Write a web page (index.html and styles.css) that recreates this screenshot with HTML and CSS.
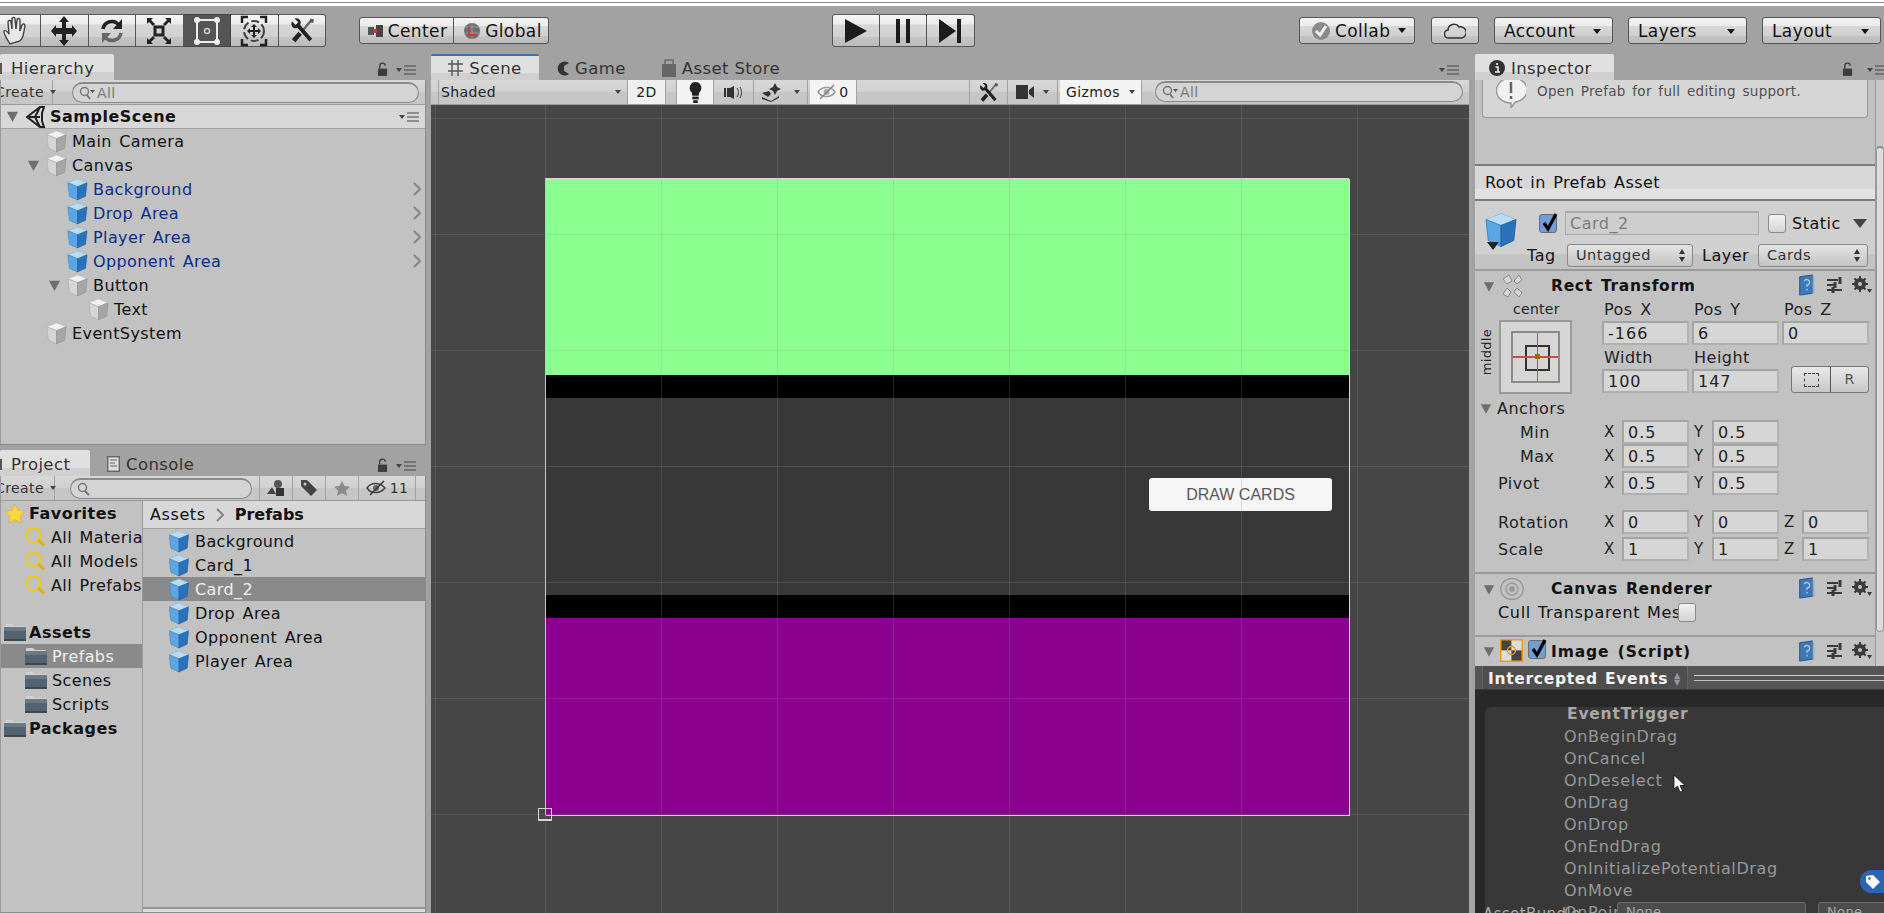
FILE: index.html
```html
<!DOCTYPE html>
<html lang="en">
<head>
    <meta charset="UTF-8" />
    <title>Unity - SampleScene</title>
    <link rel="stylesheet" href="styles.css">
</head>
<body>
    <svg class="defs" width="0" height="0">
        <defs>
            <symbol id="cube" viewBox="0 0 22 24">
                <path d="M11 1 21 5 11 9 1 5Z" fill="#f2f2f2" stroke="#c4c4c4" stroke-width=".6"/>
                <path d="M1 5 11 9V23L2.500 19Z" fill="#d6d6d6" stroke="#a8a8a8" stroke-width=".6"/>
                <path d="M21 5 11 9V23L19.500 19Z" fill="#a6a6a6" stroke="#8c8c8c" stroke-width=".6"/>
            </symbol>
            <symbol id="cube-blue" viewBox="0 0 22 24">
                <path d="M11 1 21 5 11 9 1 5Z" fill="#bcdcf6" stroke="#8cbce4" stroke-width=".6"/>
                <path d="M1 5 11 9V23L2.500 19Z" fill="#5aa6e6" stroke="#3f7fb8" stroke-width=".6"/>
                <path d="M21 5 11 9V23L19.500 19Z" fill="#2a72bc" stroke="#225f9c" stroke-width=".6"/>
            </symbol>
            <symbol id="folder" viewBox="0 0 22 20">
                <path d="M1 3a1 1 0 0 1 1-1h6l2 2h10a1 1 0 0 1 1 1v4H1Z" fill="#d0d0d0"/>
                <rect x="0" y="5" width="22" height="14" rx="1.500" fill="#52626e"/>
                <rect x="0" y="5" width="22" height="4" rx="1.500" fill="#6c7882"/>
                <rect x="0" y="17" width="22" height="2" fill="#3e4a52"/>
            </symbol>
            <symbol id="mag" viewBox="0 0 22 22">
                <circle cx="9" cy="9" r="7.500" fill="none" stroke="#f0c818" stroke-width="2"/>
                <path d="M14 14 20 20" stroke="#e0b010" stroke-width="3"/>
            </symbol>
            <symbol id="lock" viewBox="0 0 12 16">
                <path d="M3 7V4a3 3 0 0 1 6 0" fill="none" stroke="#3c3c3c" stroke-width="1.500"/>
                <rect x="1" y="7" width="10" height="8" fill="#3c3c3c"/>
            </symbol>
            <symbol id="menu" viewBox="0 0 21 10">
                <path d="M0 3H6L3 7Z" fill="#444"/>
                <path d="M8 1H20M8 5H20M8 9H20" stroke="#444" stroke-width="1.200"/>
            </symbol>
            <symbol id="help" viewBox="0 0 18 24">
                <path d="M1 3 15 1V21L1 23Z" fill="#3f78b4" stroke="#24507e"/>
                <path d="M15 1 17 3V22L15 21Z" fill="#8fb2d4"/>
                <path d="M6 8a3 3 0 1 1 3 4v2M9 16v2" fill="none" stroke="#a8c8e6" stroke-width="1.500"/>
            </symbol>
            <symbol id="presets" viewBox="0 0 15 16">
                <path d="M0 3H11M0 8H7M0 13H15" stroke="#3a3a3a" stroke-width="2"/>
                <path d="M13 0V7M8 5V11M6 10V16" stroke="#3a3a3a" stroke-width="3"/>
            </symbol>
            <symbol id="gear" viewBox="0 0 20 18">
                <circle cx="8" cy="8" r="4.500" fill="none" stroke="#3a3a3a" stroke-width="3"/>
                <path d="M8 0V16M0 8H16M2.500 2.500 13.500 13.500M13.500 2.500 2.500 13.500" stroke="#3a3a3a" stroke-width="2"/>
                <circle cx="8" cy="8" r="2" fill="#c2c2c2"/>
                <path d="M15 13H20L17.500 17Z" fill="#3a3a3a"/>
            </symbol>
            <symbol id="arrow-down" viewBox="0 0 14 14">
                <path d="M1 2H13L7 13Z" fill="#6e6e6e"/>
            </symbol>
            <symbol id="chev" viewBox="0 0 8 14">
                <path d="M1 1 7 7 1 13" fill="none" stroke="#868686" stroke-width="2"/>
            </symbol>
            <symbol id="tools" viewBox="0 0 26 28">
                <path d="M14 14 23 3" stroke="#666" stroke-width="2.500"/>
                <path d="M22 1 26 2 25 6 22 5Z" fill="#555"/>
                <path d="M2 4 6 8 9 5 5 1C10 0 13 4 11 8L24 23 21 26 8 11C4 13 0 9 2 4Z" fill="#222"/>
                <path d="M11 17 4 25" stroke="#222" stroke-width="5"/>
            </symbol>
            <symbol id="tick" viewBox="0 0 18 20">
                <path d="M4 10 8 16 16 1" fill="none" stroke="#000" stroke-width="3.200"/>
            </symbol>
        </defs>
    </svg>

    <div class="topstrip"></div>

    <header class="toolbar">
        <div class="btn-group tools">
            <button class="tool">
                <svg width="26" height="30" viewBox="0 0 26 30"><path d="M8 28C5 23 1 17 2 15c1-1 3 0 5 3L6 6c0-2 3-2 3 0l1 7 0-10c0-2 3-2 3 0l1 10 1-9c0-2 3-2 3 0l0 11 2-6c1-2 3-1 3 1l-2 10c-1 3-2 4-3 5Z" fill="#e8e8e8" stroke="#444" stroke-width="1.400"/></svg>
            </button>
            <button class="tool">
                <svg width="26" height="30" viewBox="0 0 26 30"><path d="M13 0 18 6H15V12H21V9L26 15 21 21V18H15V24H18L13 30 8 24H11V18H5V21L0 15 5 9V12H11V6H8Z" fill="#222"/></svg>
            </button>
            <button class="tool">
                <svg width="24" height="26" viewBox="0 0 24 26"><path d="M3 11A9 9 0 0 1 19 7" fill="none" stroke="#222" stroke-width="3.500"/><path d="M22 1V11H13Z" fill="#222"/><path d="M21 15A9 9 0 0 1 5 19" fill="none" stroke="#666" stroke-width="3.500"/><path d="M2 25V15H11Z" fill="#666"/></svg>
            </button>
            <button class="tool">
                <svg width="26" height="28" viewBox="0 0 26 28"><rect x="9" y="10" width="8" height="8" fill="none" stroke="#222" stroke-width="3"/><path d="M1 1H7L5 3 9 7 7 9 3 5 1 7ZM25 1H19L21 3 17 7 19 9 23 5 25 7ZM1 27H7L5 25 9 21 7 19 3 23 1 21ZM25 27H19L21 25 17 21 19 19 23 23 25 21Z" fill="#222"/></svg>
            </button>
            <button class="tool tool-on">
                <svg width="28" height="30" viewBox="0 0 28 30"><rect x="4" y="4" width="20" height="22" fill="none" stroke="#eee" stroke-width="2"/><circle cx="4" cy="4" r="3" fill="#eee"/><circle cx="24" cy="4" r="3" fill="#eee"/><circle cx="4" cy="26" r="3" fill="#eee"/><circle cx="24" cy="26" r="3" fill="#eee"/><circle cx="14" cy="15" r="2.500" fill="none" stroke="#ccc" stroke-width="1.500"/></svg>
            </button>
            <button class="tool">
                <svg width="28" height="32" viewBox="0 0 28 32"><path d="M2 8V2H8M20 2H26V8M2 24V30H8M20 30H26V24" fill="none" stroke="#222" stroke-width="2.500"/><circle cx="14" cy="16" r="10" fill="none" stroke="#444" stroke-width="2" stroke-dasharray="8 3"/><path d="M14 9 17 12H15V15H18V13L21 16 18 19V17H15V20H17L14 23 11 20H13V17H10V19L7 16 10 13V15H13V12H11Z" fill="#222"/></svg>
            </button>
            <button class="tool">
                <svg width="24" height="27"><use href="#tools"/></svg>
            </button>
        </div>

        <div class="btn-group pivot">
            <button class="small-btn pivot-center">
                <svg width="15" height="12" viewBox="0 0 15 12"><rect x="0" y="2" width="6" height="8" fill="#555"/><rect x="8" y="0" width="7" height="12" fill="#444"/><rect x="5" y="4" width="4" height="4" fill="#c83a3a"/></svg>
                Center
            </button>
            <button class="small-btn pivot-global">
                <svg width="16" height="20" viewBox="0 0 16 20"><circle cx="8" cy="10" r="8" fill="#6e6e6e"/><path d="M1 6H15M1 12H15M8 2V18" stroke="#999"/><path d="M5 6V14H13" fill="none" stroke="#d03a3a" stroke-width="2"/></svg>
                Global
            </button>
        </div>

        <div class="btn-group play">
            <button class="tool play-btn"><svg width="22" height="24" viewBox="0 0 22 24"><path d="M0 0 22 12 0 24Z" fill="#1c1c1c"/></svg></button>
            <button class="tool play-btn"><svg width="14" height="24" viewBox="0 0 14 24"><path d="M0 0H4V24H0ZM10 0H14V24H10Z" fill="#1c1c1c"/></svg></button>
            <button class="tool play-btn"><svg width="22" height="24" viewBox="0 0 22 24"><path d="M0 0 17 12 0 24ZM18 0H22V24H18Z" fill="#1c1c1c"/></svg></button>
        </div>

        <div class="right-btns">
            <button class="small-btn solo collab">
                <svg width="18" height="20" viewBox="0 0 18 20"><circle cx="9" cy="10" r="9" fill="#8a8a8a"/><path d="M4 10 8 14 14 5" fill="none" stroke="#f0f0f0" stroke-width="3"/></svg>
                Collab <i class="caret"></i>
            </button>
            <button class="small-btn solo cloud">
                <svg width="22" height="17" viewBox="0 0 22 17"><path d="M5 16a4 4 0 0 1-1-8 6 6 0 0 1 11-3 5 5 0 0 1 3 11Z" fill="none" stroke="#333" stroke-width="1.500"/></svg>
            </button>
            <button class="small-btn solo wide">Account <i class="caret"></i></button>
            <button class="small-btn solo wide">Layers <i class="caret"></i></button>
            <button class="small-btn solo wide">Layout <i class="caret"></i></button>
        </div>
    </header>

    <main class="dock">
        <div class="left-col">
            <section class="hierarchy">
                <div class="tabrow">
                    <div class="tab tab-on tab-hier"><i class="tab-cut"></i>Hierarchy</div>
                    <svg class="lock" width="11" height="15"><use href="#lock"/></svg>
                    <svg class="menu" width="21" height="10"><use href="#menu"/></svg>
                </div>
                <div class="panel">
                    <div class="minibar">
                        <div class="create">Create <i class="caret-s"></i></div>
                        <div class="search search-hier"><svg width="16" height="14" viewBox="0 0 16 14"><circle cx="5.500" cy="5.500" r="4" fill="none" stroke="#777" stroke-width="1.500"/><path d="M8 9 11 13" stroke="#777" stroke-width="2"/><path d="M11 4H16L13.500 7Z" fill="#555"/></svg>All</div>
                    </div>
                    <div class="scene-head">
                        <svg class="arrow" width="13" height="13"><use href="#arrow-down"/></svg>
                        <svg width="21" height="24" viewBox="0 0 21 24"><path d="M2 12 15 2 19 2 17 8 17 16 19 22 15 22ZM4 12H15M15 2 10 12 15 22" fill="none" stroke="#222" stroke-width="2"/></svg>
                        <span>SampleScene</span>
                        <svg class="menu head-menu" width="21" height="10"><use href="#menu"/></svg>
                    </div>
                    <ul class="tree">
                        <li class="tree-row d1"><span class="slot"></span><svg class="ico" width="21" height="23"><use href="#cube"/></svg>Main Camera</li>
                        <li class="tree-row d1"><span class="slot"><svg width="13" height="13"><use href="#arrow-down"/></svg></span><svg class="ico" width="21" height="23"><use href="#cube"/></svg>Canvas</li>
                        <li class="tree-row d2 prefab"><span class="slot"></span><svg class="ico" width="21" height="23"><use href="#cube-blue"/></svg>Background<svg class="chev" width="8" height="14"><use href="#chev"/></svg></li>
                        <li class="tree-row d2 prefab"><span class="slot"></span><svg class="ico" width="21" height="23"><use href="#cube-blue"/></svg>Drop Area<svg class="chev" width="8" height="14"><use href="#chev"/></svg></li>
                        <li class="tree-row d2 prefab"><span class="slot"></span><svg class="ico" width="21" height="23"><use href="#cube-blue"/></svg>Player Area<svg class="chev" width="8" height="14"><use href="#chev"/></svg></li>
                        <li class="tree-row d2 prefab"><span class="slot"></span><svg class="ico" width="21" height="23"><use href="#cube-blue"/></svg>Opponent Area<svg class="chev" width="8" height="14"><use href="#chev"/></svg></li>
                        <li class="tree-row d2"><span class="slot"><svg width="13" height="13"><use href="#arrow-down"/></svg></span><svg class="ico" width="21" height="23"><use href="#cube"/></svg>Button</li>
                        <li class="tree-row d3"><span class="slot"></span><svg class="ico" width="21" height="23"><use href="#cube"/></svg>Text</li>
                        <li class="tree-row d1"><span class="slot"></span><svg class="ico" width="21" height="23"><use href="#cube"/></svg>EventSystem</li>
                    </ul>
                </div>
            </section>

            <section class="project">
                <div class="tabrow">
                    <div class="tab tab-on tab-proj"><i class="tab-cut"></i>Project</div>
                    <div class="tab tab-console">
                        <svg width="13" height="16" viewBox="0 0 13 16"><rect x=".7" y=".7" width="11.600" height="14.600" fill="#ddd" stroke="#666" stroke-width="1.400"/><path d="M3 4H10M3 7H8M3 10H10" stroke="#666" stroke-width="1.200"/></svg>
                        Console
                    </div>
                    <svg class="lock" width="11" height="15"><use href="#lock"/></svg>
                    <svg class="menu" width="21" height="10"><use href="#menu"/></svg>
                </div>
                <div class="panel">
                    <div class="minibar proj-bar">
                        <div class="create create-proj">Create <i class="caret-s"></i></div>
                        <div class="search search-proj"><svg width="14" height="14" viewBox="0 0 14 14"><circle cx="5.500" cy="5.500" r="4" fill="none" stroke="#777" stroke-width="1.500"/><path d="M8 9 12 13" stroke="#777" stroke-width="2"/></svg></div>
                        <div class="bar-btn"><svg width="18" height="16" viewBox="0 0 18 16"><path d="M5 7 9 14H0Z" fill="#444"/><circle cx="11" cy="4" r="4" fill="#555"/><rect x="9" y="8" width="8" height="8" fill="#333"/></svg></div>
                        <div class="bar-btn"><svg width="18" height="18" viewBox="0 0 18 18"><path d="M1 1H7L17 11 11 17 1 7Z" fill="#444"/><circle cx="5" cy="5" r="1.500" fill="#ccc"/></svg></div>
                        <div class="bar-btn"><svg width="16" height="15" viewBox="0 0 16 15"><path d="M8 0 10.500 5 16 5.700 12 9.500 13 15 8 12.300 3 15 4 9.500 0 5.700 5.500 5Z" fill="#8c8c8c"/></svg></div>
                        <div class="bar-btn bar-btn-wide"><svg width="20" height="16" viewBox="0 0 20 16"><path d="M1 8C5 2 14 2 19 8 14 14 5 14 1 8Z" fill="none" stroke="#444" stroke-width="1.500"/><circle cx="10" cy="8" r="3" fill="#666"/><path d="M4 15 18 1" stroke="#333" stroke-width="1.500"/></svg>11</div>
                    </div>
                    <div class="proj-body">
                        <ul class="proj-side">
                            <li class="side-row strong"><svg class="side-star" width="20" height="19" viewBox="0 0 20 19"><path d="M10 0 13 6.500 20 7.300 15 12 16.300 19 10 15.600 3.700 19 5 12 0 7.300 7 6.500Z" fill="#fbd83a" stroke="#d8b020" stroke-width=".6"/></svg>Favorites</li>
                            <li class="side-row sub"><svg width="21" height="22"><use href="#mag"/></svg>All Materials</li>
                            <li class="side-row sub"><svg width="21" height="22"><use href="#mag"/></svg>All Models</li>
                            <li class="side-row sub"><svg width="21" height="22"><use href="#mag"/></svg>All Prefabs</li>
                            <li class="side-row blank"></li>
                            <li class="side-row strong root"><svg width="22" height="20"><use href="#folder"/></svg>Assets</li>
                            <li class="side-row sub sel"><svg width="22" height="20"><use href="#folder"/></svg>Prefabs</li>
                            <li class="side-row sub"><svg width="22" height="20"><use href="#folder"/></svg>Scenes</li>
                            <li class="side-row sub"><svg width="22" height="20"><use href="#folder"/></svg>Scripts</li>
                            <li class="side-row strong root"><svg width="22" height="20"><use href="#folder"/></svg>Packages</li>
                        </ul>
                        <div class="proj-main">
                            <div class="crumb">Assets <svg width="8" height="14"><use href="#chev"/></svg> <b>Prefabs</b></div>
                            <ul class="files">
                                <li class="file"><svg width="22" height="23"><use href="#cube-blue"/></svg>Background</li>
                                <li class="file"><svg width="22" height="23"><use href="#cube-blue"/></svg>Card_1</li>
                                <li class="file sel"><svg width="22" height="23"><use href="#cube-blue"/></svg>Card_2</li>
                                <li class="file"><svg width="22" height="23"><use href="#cube-blue"/></svg>Drop Area</li>
                                <li class="file"><svg width="22" height="23"><use href="#cube-blue"/></svg>Opponent Area</li>
                                <li class="file"><svg width="22" height="23"><use href="#cube-blue"/></svg>Player Area</li>
                            </ul>
                            <div class="proj-slider"></div>
                        </div>
                    </div>
                </div>
            </section>
        </div>

        <div class="splitter"></div>

        <section class="scene-col">
            <div class="tabrow">
                <div class="tab tab-on tab-scene">
                    <svg width="15" height="16" viewBox="0 0 15 16"><path d="M4 0V16M10 0V16M0 4H15M0 11H15" stroke="#555" stroke-width="1.400"/></svg>
                    Scene
                </div>
                <div class="tab tab-game">
                    <svg width="12" height="15" viewBox="0 0 12 15"><path d="M12 2A7 7 0 1 0 12 13L7 10 7 5Z" fill="#333"/></svg>
                    Game
                </div>
                <div class="tab tab-store">
                    <svg width="14" height="18" viewBox="0 0 14 18"><rect y="5" width="14" height="13" fill="#666"/><path d="M3 5V1H11V5" fill="none" stroke="#777" stroke-width="2"/></svg>
                    Asset Store
                </div>
                <svg class="menu" width="21" height="10"><use href="#menu"/></svg>
            </div>
            <div class="scene-bar">
                <div class="sb-item sb-shaded">Shaded <i class="caret-s"></i></div>
                <div class="sb-item sb-2d">2D</div>
                <div class="sb-item sb-on sb-light"><svg width="13" height="21" viewBox="0 0 13 23"><path d="M6.500 0a6.500 6.500 0 0 1 4 11.500L10 15H3L2.500 11.500A6.500 6.500 0 0 1 6.500 0Z" fill="#222"/><rect x="3" y="16" width="7" height="3" fill="#222"/><rect x="4" y="20" width="5" height="3" fill="#222"/></svg></div>
                <div class="sb-item sb-audio"><svg width="19" height="13" viewBox="0 0 19 13"><rect y="2" width="2" height="9" fill="#333"/><path d="M3 2H6L10 0V13L6 11H3Z" fill="#333"/><path d="M13 2C15 5 15 8 13 11M16 1C18 5 18 8 16 12" fill="none" stroke="#333"/></svg></div>
                <div class="sb-item sb-fx"><svg width="19" height="19" viewBox="0 0 19 19"><path d="M13 0 15 4 19 6 15 8 13 12 11 8 7 6 11 4ZM0 10 7 8 9 11 6 14ZM0 14 9 18 17 13 17 15 9 19 0 16Z" fill="#333"/></svg><i class="caret-s"></i></div>
                <div class="sb-item sb-on sb-hidden"><svg width="19" height="16" viewBox="0 0 19 16"><path d="M1 8C5 2 14 2 18 8 14 14 5 14 1 8Z" fill="none" stroke="#999" stroke-width="1.500"/><circle cx="9.500" cy="8" r="3" fill="#aaa"/><path d="M3 15 17 1" stroke="#888" stroke-width="1.500"/></svg>0</div>
                <div class="sb-fill"></div>
                <div class="sb-item sb-tools"><svg width="19" height="21"><use href="#tools"/></svg></div>
                <div class="sb-item sb-cam"><svg width="18" height="14" viewBox="0 0 18 14"><rect width="12" height="14" fill="#333"/><path d="M13 5 18 1V13L13 9Z" fill="#333"/></svg><i class="caret-s"></i></div>
                <div class="sb-item sb-on sb-gizmos">Gizmos <i class="caret-s"></i></div>
                <div class="search search-scene"><svg width="16" height="14" viewBox="0 0 16 14"><circle cx="5.500" cy="5.500" r="4" fill="none" stroke="#777" stroke-width="1.500"/><path d="M8 9 11 13" stroke="#777" stroke-width="2"/><path d="M11 4H16L13.500 7Z" fill="#555"/></svg>All</div>
            </div>
            <div class="viewport">
                <div class="game-canvas">
                    <div class="area area-opponent"></div>
                    <div class="area-gap"></div>
                    <div class="area area-drop">
                        <div class="draw-btn">DRAW CARDS</div>
                    </div>
                    <div class="area-gap"></div>
                    <div class="area area-player"></div>
                </div>
                <div class="grid-lines"></div>
                <div class="rect-handle"></div>
            </div>
        </section>

        <div class="splitter"></div>

        <section class="inspector">
            <div class="tabrow">
                <div class="tab tab-on tab-insp">
                    <svg width="16" height="16" viewBox="0 0 16 16"><circle cx="8" cy="8" r="8" fill="#333"/><path d="M8 3V5M6.500 7H9V12M6 12H11" stroke="#eee" stroke-width="1.600" fill="none"/></svg>
                    Inspector
                </div>
                <svg class="lock" width="11" height="15"><use href="#lock"/></svg>
                <svg class="menu menu-cut" width="21" height="10"><use href="#menu"/></svg>
            </div>
            <div class="insp-scroll">
                <div class="insp-content">
                    <div class="prefab-zone">
                        <div class="helpbox">
                            <svg width="30" height="30" viewBox="0 0 30 30"><path d="M15 0a14 12 0 0 1 4 24L15 30V25A14 12 0 0 1 15 0Z" fill="#f2f2f2" stroke="#9a9a9a" stroke-width="1.500"/><path d="M15 4V15M15 18V21" stroke="#666" stroke-width="2.500"/></svg>
                            Open Prefab for full editing support.
                        </div>
                    </div>
                    <div class="root-row">Root in Prefab Asset</div>
                    <div class="go-head">
                        <svg class="go-cube" width="34" height="36"><use href="#cube-blue"/></svg>
                        <svg class="go-tri" width="12" height="8" viewBox="0 0 12 8"><path d="M0 0H12L6 8Z" fill="#222"/></svg>
                        <div class="go-rows">
                            <div class="go-line">
                                <span class="check check-on"><svg width="18" height="20"><use href="#tick"/></svg></span>
                                <div class="name-field">Card_2</div>
                                <span class="check static-check"></span>
                                <span class="static-label">Static</span>
                                <svg class="static-arrow" width="14" height="9" viewBox="0 0 14 9"><path d="M0 0H14L7 9Z" fill="#444"/></svg>
                            </div>
                            <div class="go-line go-line2">
                                <span class="tag-label">Tag</span>
                                <div class="popup popup-tag">Untagged</div>
                                <span class="layer-label">Layer</span>
                                <div class="popup popup-layer">Cards</div>
                            </div>
                        </div>
                    </div>

                    <div class="comp comp-rect">
                        <div class="comp-head">
                            <svg class="arrow" width="12" height="13"><use href="#arrow-down"/></svg>
                            <svg class="comp-ico" width="25" height="24" viewBox="0 0 25 24"><g fill="#d8d8d8" stroke="#8a8a8a"><path d="M9 1 12 7 7 10 3 5Z"/><path d="M19 1 22 6 17 10 14 7Z"/><path d="M7 14 11 18 8 23 3 20Z"/><path d="M17 14 22 19 19 23 14 18Z"/></g></svg>
                            <span class="comp-title">Rect Transform</span>
                            <svg class="c-help" width="18" height="22"><use href="#help"/></svg>
                            <svg class="c-pre" width="15" height="16"><use href="#presets"/></svg>
                            <svg class="c-gear" width="20" height="18"><use href="#gear"/></svg>
                        </div>
                        <div class="rt-top">
                            <div class="anchor">
                                <span class="anchor-h">center</span>
                                <span class="anchor-v">middle</span>
                                <div class="anchor-box">
                                    <div class="anchor-inner"><div class="anchor-square"></div><i class="anchor-red-h"></i><i class="anchor-red-v"></i><i class="anchor-dot"></i></div>
                                </div>
                            </div>
                            <div class="rt-grid">
                                <span>Pos X</span><span>Pos Y</span><span>Pos Z</span>
                                <div class="field">-166</div><div class="field">6</div><div class="field">0</div>
                                <span>Width</span><span>Height</span><span></span>
                                <div class="field">100</div><div class="field">147</div>
                                <div class="bp-btns">
                                    <div class="bp-a"><i></i></div><div class="bp-b">R</div>
                                </div>
                            </div>
                        </div>
                        <div class="vec-row anchors-row"><svg class="arrow" width="12" height="13"><use href="#arrow-down"/></svg><span>Anchors</span></div>
                        <div class="vec-row"><span class="vec-name sub-name">Min</span><span class="axis">X</span><div class="field short">0.5</div><span class="axis">Y</span><div class="field short">0.5</div></div>
                        <div class="vec-row"><span class="vec-name sub-name">Max</span><span class="axis">X</span><div class="field short">0.5</div><span class="axis">Y</span><div class="field short">0.5</div></div>
                        <div class="vec-row pivot-row"><span class="vec-name">Pivot</span><span class="axis">X</span><div class="field short">0.5</div><span class="axis">Y</span><div class="field short">0.5</div></div>
                        <div class="vec-row rot-row"><span class="vec-name">Rotation</span><span class="axis">X</span><div class="field short">0</div><span class="axis">Y</span><div class="field short">0</div><span class="axis">Z</span><div class="field short">0</div></div>
                        <div class="vec-row scale-row"><span class="vec-name">Scale</span><span class="axis">X</span><div class="field short">1</div><span class="axis">Y</span><div class="field short">1</div><span class="axis">Z</span><div class="field short">1</div></div>
                    </div>

                    <div class="comp comp-renderer">
                        <div class="comp-head">
                            <svg class="arrow" width="12" height="13"><use href="#arrow-down"/></svg>
                            <svg class="comp-ico" width="24" height="24" viewBox="0 0 24 24"><ellipse cx="12" cy="12" rx="11.300" ry="10.500" fill="none" stroke="#9a9a9a" stroke-width="1.400"/><circle cx="12" cy="12" r="6" fill="none" stroke="#9a9a9a" stroke-width="1.400"/><circle cx="12" cy="12" r="3" fill="#9a9a9a"/></svg>
                            <span class="comp-title">Canvas Renderer</span>
                            <svg class="c-help" width="18" height="22"><use href="#help"/></svg>
                            <svg class="c-pre" width="15" height="16"><use href="#presets"/></svg>
                            <svg class="c-gear" width="20" height="18"><use href="#gear"/></svg>
                        </div>
                        <div class="cull-row"><span class="cull-text">Cull Transparent Mesh</span><span class="check"></span></div>
                    </div>

                    <div class="comp comp-image">
                        <div class="comp-head">
                            <svg class="arrow" width="12" height="13"><use href="#arrow-down"/></svg>
                            <svg class="comp-ico img-ico" width="23" height="23" viewBox="0 0 23 23"><rect width="23" height="23" fill="#f09a10"/><rect x="1.500" y="1.500" width="10" height="10" fill="#444"/><rect x="11.500" y="1.500" width="10" height="10" fill="#ddd"/><rect x="1.500" y="11.500" width="10" height="10" fill="#ddd"/><rect x="11.500" y="11.500" width="10" height="10" fill="#444"/><circle cx="11.500" cy="11.500" r="4" fill="none" stroke="#f09a10" stroke-width="1.500"/></svg>
                            <span class="check check-on img-check"><svg width="18" height="20"><use href="#tick"/></svg></span>
                            <span class="comp-title img-title">Image (Script)</span>
                            <svg class="c-help" width="18" height="22"><use href="#help"/></svg>
                            <svg class="c-pre" width="15" height="16"><use href="#presets"/></svg>
                            <svg class="c-gear" width="20" height="18"><use href="#gear"/></svg>
                        </div>
                    </div>
                </div>
                <div class="scrollbar"><div class="scroll-thumb"></div></div>
            </div>

            <div class="debugger">
                <div class="debug-head">
                    <div class="debug-tab">Intercepted Events <span class="updown">&#9650;<br>&#9660;</span></div>
                    <div class="debug-rule"></div>
                </div>
                <div class="debug-box">
                    <div class="ev-title">EventTrigger</div>
                    <div class="ev">OnBeginDrag</div>
                    <div class="ev">OnCancel</div>
                    <div class="ev">OnDeselect</div>
                    <div class="ev">OnDrag</div>
                    <div class="ev">OnDrop</div>
                    <div class="ev">OnEndDrag</div>
                    <div class="ev">OnInitializePotentialDrag</div>
                    <div class="ev">OnMove</div>
                    <div class="ev">OnPointerClick</div>
                </div>
                <div class="bundle-row">
                    <span class="bundle-label">AssetBundle</span>
                    <div class="bundle-pop bundle-a">None</div>
                    <div class="bundle-pop bundle-b">None</div>
                </div>
                <div class="label-badge"><svg width="14" height="14" viewBox="0 0 14 14"><path d="M0 1 7 0 14 7 7 14 0 7Z" fill="#fff"/><circle cx="3.500" cy="3.500" r="1.300" fill="#2a65b5"/></svg></div>
                <svg class="cursor" width="13" height="19" viewBox="0 0 13 19"><path d="M1 1V15L4.500 12 7 18 9.500 17 7 11.500H12Z" fill="#fff" stroke="#111" stroke-width=".8"/></svg>
            </div>
        </section>
    </main>
</body>
</html>
```

FILE: styles.css
```css
* {
    box-sizing: border-box;
}
html, body {
    margin: 0;
    height: 913px;
    overflow: hidden;
}
body {
    font-family: 'DejaVu Sans', sans-serif;
    font-size: 16px;
    letter-spacing: 0.4px;
    word-spacing: 2px;
    color: #111;
    background: #a2a2a2;
}
ul {
    list-style: none;
    margin: 0;
    padding: 0;
}
svg {
    flex: none;
}
.defs {
    display: block;
    height: 0;
}

/* top bar */
.topstrip {
    height: 6px;
    background: #fff;
    border-top: 1px solid #fff;
    box-shadow: inset 0 1px 0 #fff, inset 0 2px 0 #8a8a8a;
}
.toolbar {
    height: 48px;
    display: flex;
    align-items: flex-start;
    padding-top: 8px;
    background: #a2a2a2;
}
.btn-group {
    display: flex;
}
.tool, .small-btn {
    font: inherit;
    letter-spacing: inherit;
    color: #111;
    padding: 0;
    display: flex;
    align-items: center;
    justify-content: center;
    background: linear-gradient(#f4f4f4 0, #ececec 30%, #d8d8d8 31%, #d0d0d0 70%, #c4c4c4 71%, #bcbcbc 100%);
    border: 1px solid #555;
}
.tool {
    width: 47.500px;
    height: 33px;
    border-left-width: 0;
}
.tools .tool:first-child {
    width: 41px;
}
.tools .tool:first-child svg {
    margin-left: -10px;
}
.tools .tool:last-child {
    border-radius: 0 3px 3px 0;
}
.tool-on {
    background: #555;
    border-color: #444;
}
.play {
    margin-left: 283px;
}
.play-btn {
    width: 47.500px;
}
.play-btn:first-child {
    border-left-width: 1px;
    border-radius: 3px 0 0 3px;
}
.play-btn:last-child {
    border-radius: 0 3px 3px 0;
}
.small-btn {
    height: 27px;
    margin-top: 3px;
    gap: 5px;
    font-size: 17px;
}
.pivot {
    margin-left: 33px;
}
.pivot-center {
    width: 95px;
    padding-left: 2px;
    border-radius: 3px 0 0 3px;
}
.pivot-global {
    width: 95px;
    padding-left: 4px;
    border-left-width: 0;
    border-radius: 0 3px 3px 0;
}
.right-btns {
    margin-left: auto;
    margin-right: 3px;
    display: flex;
}
.solo {
    border-radius: 3px;
}
.collab {
    width: 116px;
    justify-content: flex-start;
    padding-left: 12px;
}
.cloud {
    width: 48px;
    margin-left: 16px;
}
.wide {
    width: 119px;
    margin-left: 15px;
    justify-content: flex-start;
    padding-left: 9px;
    position: relative;
}
.caret {
    width: 0;
    height: 0;
    border: 4px solid transparent;
    border-top: 5px solid #111;
    border-bottom: 0;
    margin-left: 3px;
}
.wide .caret {
    position: absolute;
    right: 11px;
    top: 11px;
}
.caret-s {
    display: inline-block;
    width: 0;
    height: 0;
    border: 3.500px solid transparent;
    border-top: 4px solid #444;
    border-bottom: 0;
}

/* dock */
.dock {
    height: 859px;
    display: flex;
}
.left-col {
    width: 426px;
    display: flex;
    flex-direction: column;
}
.splitter {
    width: 6px;
    background: #a2a2a2;
}
.left-col + .splitter {
    width: 5px;
}
.tabrow {
    height: 26px;
    display: flex;
    align-items: flex-end;
    position: relative;
    font-size: 16.500px;
    color: #333;
}
.tab {
    height: 26px;
    padding-top: 2px;
    display: flex;
    align-items: center;
    gap: 6px;
}
.tab-on {
    background: linear-gradient(#e0e0e0 0, #e0e0e0 70%, #d0d0d0 71%, #d0d0d0 100%);
    border-radius: 2px 2px 0 0;
}
.tab-cut {
    position: absolute;
    left: 0;
    top: 9px;
    width: 2px;
    height: 11px;
    background: #555;
}
.lock {
    position: absolute;
    left: 377px;
    top: 8px;
}
.menu {
    position: absolute;
    right: 9px;
    top: 11px;
}
.hierarchy {
    height: 391px;
}
.tab-hier {
    width: 114px;
    padding-left: 11px;
}
.panel {
    background: #c2c2c2;
    border: 1px solid #8c8c8c;
    border-left-color: #9a9a9a;
    border-top: 0;
}
.hierarchy .panel {
    height: 365px;
}
.minibar {
    height: 25px;
    display: flex;
    align-items: center;
    background: linear-gradient(#d8d8d8, #d0d0d0 50%, #c6c6c6 51%);
    border-bottom: 1px solid #9a9a9a;
    font-size: 14px;
    overflow: hidden;
    color: #333;
}
.create {
    width: 58px;
    height: 100%;
    flex: none;
    display: flex;
    align-items: center;
    gap: 6px;
    margin-left: -6px;
    padding-left: 0;
    border-right: 1px solid #a2a2a2;
    white-space: nowrap;
}
.search {
    height: 21px;
    display: flex;
    align-items: center;
    gap: 2px;
    padding-left: 6px;
    font-size: 14px;
    color: #7a7a7a;
    background: #d4d4d4;
    border: 1px solid #8a8a8a;
    border-top-width: 2px;
    border-radius: 11px;
}
.search-hier {
    width: 347px;
    margin-left: 19px;
}
.scene-head {
    height: 24px;
    display: flex;
    align-items: center;
    background: #d8d8d8;
    border-bottom: 1px solid #a2a2a2;
    padding-left: 5px;
    position: relative;
    font-weight: bold;
    font-size: 16px;
    letter-spacing: 0.5px;
}
.scene-head .arrow {
    margin-right: 6px;
}
.scene-head span {
    margin-left: 4px;
}
.head-menu {
    right: 5px;
    top: 7px;
}
.tree-row {
    height: 24px;
    display: flex;
    align-items: center;
    position: relative;
    white-space: nowrap;
}
.slot {
    width: 19px;
    flex: none;
    display: flex;
}
.ico {
    margin-right: 5px;
}
.d1 {
    padding-left: 26px;
}
.d2 {
    padding-left: 47px;
}
.d3 {
    padding-left: 68px;
}
.prefab {
    color: #0c2c8c;
}
.chev {
    position: absolute;
    right: 4px;
    top: 5px;
}
.project {
    margin-top: 5px;
    flex: 1;
    display: flex;
    flex-direction: column;
}
.project .panel {
    flex: 1;
    display: flex;
    flex-direction: column;
}
.tab-proj {
    width: 90px;
    padding-left: 11px;
}
.tab-console {
    margin-left: 17px;
}
.tab-console, .tab-game, .tab-store {
    color: #333;
}
.proj-bar {
    flex: none;
}
.create-proj {
    width: 60px;
}
.search-proj {
    width: 182px;
    margin-left: 15px;
    flex: none;
}
.bar-btn {
    width: 33px;
    height: 100%;
    flex: none;
    display: flex;
    align-items: center;
    justify-content: center;
    gap: 4px;
    border-left: 1px solid #a2a2a2;
}
.search-proj + .bar-btn {
    margin-left: 7px;
}
.bar-btn-wide {
    width: 58px;
    border-right: 1px solid #a2a2a2;
}
.proj-body {
    flex: 1;
    display: flex;
    min-height: 0;
}
.proj-side {
    width: 142px;
    flex: none;
    padding-top: 0;
    border-right: 1px solid #9a9a9a;
    overflow: hidden;
}
.side-row {
    height: 24px;
    display: flex;
    align-items: center;
    gap: 5px;
    white-space: nowrap;
    padding-left: 3px;
}
.side-row.strong {
    font-weight: bold;
    font-size: 16px;
    letter-spacing: 0.5px;
    gap: 3px;
}
.side-star {
    margin-left: 1px;
    margin-right: 1px;
}
.side-row.sub {
    padding-left: 24px;
}
.sel {
    background: #8a8a8a;
    color: #f0f0f0;
}
.blank {
    height: 23px;
}
.proj-main {
    flex: 1;
    display: flex;
    flex-direction: column;
    min-width: 0;
}
.crumb {
    height: 28px;
    flex: none;
    display: flex;
    align-items: center;
    gap: 10px;
    padding-left: 7px;
    background: #d8d8d8;
    border-bottom: 1px solid #a2a2a2;
    letter-spacing: 0.6px;
}
.crumb b {
    margin-left: 1px;
    letter-spacing: 0;
}
.files {
    flex: 1;
}
.file {
    height: 24px;
    display: flex;
    align-items: center;
    gap: 5px;
    padding-left: 25px;
}
.proj-slider {
    height: 5px;
    flex: none;
    background: #dcdcdc;
    border-top: 2px solid #969696;
}

/* scene */
.scene-col {
    width: 1038px;
    display: flex;
    flex-direction: column;
}
.tab-scene {
    width: 108px;
    justify-content: center;
    border-top: 2px solid #3a72b0;
    padding-top: 0;
}
.tab-game {
    margin-left: 18px;
}
.tab-store {
    margin-left: 36px;
    word-spacing: 0;
}
.scene-bar {
    height: 25px;
    display: flex;
    background: linear-gradient(#d8d8d8, #d0d0d0 50%, #c6c6c6 51%);
    border-bottom: 1px solid #9a9a9a;
    font-size: 14px;
    color: #222;
}
.sb-item {
    display: flex;
    align-items: center;
    justify-content: center;
    gap: 6px;
    border-right: 1px solid #a2a2a2;
}
.sb-shaded {
    width: 190px;
    margin-left: 7px;
    justify-content: space-between;
    padding: 0 6px 0 2px;
    border-left: 1px solid #a2a2a2;
}
.sb-2d {
    width: 38px;
    background: #f0f0f0;
    margin-left: 0;
}
.sb-on {
    background: #f4f4f4;
}
.sb-light {
    width: 38px;
    margin-left: 10px;
    border-left: 1px solid #a2a2a2;
}
.sb-audio {
    width: 40px;
}
.sb-fx {
    width: 54px;
    gap: 13px;
}
.sb-hidden {
    width: 47px;
    margin-left: 2px;
    color: #222;
    gap: 3px;
}
.sb-fill {
    width: 113px;
    border-right: 1px solid #a2a2a2;
}
.sb-tools {
    width: 38px;
}
.sb-cam {
    width: 50px;
    gap: 9px;
}
.sb-gizmos {
    width: 82px;
    margin-left: 2px;
    gap: 9px;
}
.search-scene {
    width: 308px;
    margin: 1px 0 0 13px;
}
.viewport {
    flex: 1;
    position: relative;
    background: #464646;
    padding: 73px 0 0 114px;
    overflow: hidden;
}
.game-canvas {
    width: 804px;
    height: 637px;
    box-shadow: 1px 1px 0 #d8d8d8;
    border-top: 1px solid #d8d8d8;
    border-left: 1px solid #d8d8d8;
}
.area {
    height: 197px;
}
.area-opponent {
    background: #8cff91;
    height: 196px;
}
.area-drop {
    background: #383838;
    position: relative;
}
.area-player {
    background: #8c0090;
}
.area-gap {
    height: 23px;
    background: #000;
}
.draw-btn {
    position: absolute;
    left: 603px;
    top: 80px;
    width: 183px;
    height: 33px;
    display: flex;
    align-items: center;
    justify-content: center;
    background: #f6f6f6;
    border-radius: 3px;
    font-family: 'Liberation Sans', sans-serif;
    font-size: 16px;
    letter-spacing: 0;
    word-spacing: 0;
    color: #585858;
}
.grid-lines {
    position: absolute;
    inset: 0;
    pointer-events: none;
    background-image:
        repeating-linear-gradient(to right, rgba(140,140,140,0.24) 0, rgba(140,140,140,0.24) 1px, transparent 1px, transparent 116px),
        repeating-linear-gradient(to bottom, rgba(140,140,140,0.24) 0, rgba(140,140,140,0.24) 1px, transparent 1px, transparent 116px);
    background-position: 114px 13px;
}
.rect-handle {
    position: absolute;
    left: 107px;
    top: 703px;
    width: 14px;
    height: 13px;
    border: 1px solid #d4d4d4;
    border-bottom-width: 2px;
}

/* inspector */
.inspector {
    flex: 1;
    position: relative;
    overflow: hidden;
}
.tab-insp {
    width: 139px;
    padding-left: 14px;
}
.inspector .lock {
    left: 367px;
}
.menu-cut {
    right: -4px;
}
.insp-scroll {
    height: 833px;
    display: flex;
    background: #c2c2c2;
}
.insp-content {
    width: 401px;
    border-right: 1px solid #9a9a9a;
    letter-spacing: 0.5px;
}
.prefab-zone {
    height: 86px;
    border-bottom: 2px solid #7c7c7c;
    padding: 0 7px;
}
.helpbox {
    width: 386px;
    height: 38px;
    display: flex;
    align-items: flex-start;
    gap: 11px;
    padding-left: 13px;
    background: #d6d6d6;
    border: 1px solid #9a9a9a;
    border-top: 0;
    border-radius: 0 0 4px 4px;
    font-size: 13.500px;
    letter-spacing: 0.3px;
    color: #505050;
    line-height: 22px;
}
.helpbox svg {
    margin-top: -2px;
}
.root-row {
    height: 35px;
    display: flex;
    align-items: flex-start;
    padding: 4px 0 0 10px;
    line-height: 26px;
    background: linear-gradient(#d8d8d8 0, #d8d8d8 68%, #e2e2e2 69%);
    border-bottom: 2px solid #7c7c7c;
    color: #111;
    letter-spacing: 0.4px;
}
.go-head {
    height: 70px;
    display: flex;
    background: linear-gradient(#d0d0d0 0, #d0d0d0 78%, #c4c4c4 79%);
    border-bottom: 2px solid #9a9a9a;
    position: relative;
}
.go-cube {
    margin: 11px 0 0 9px;
}
.go-tri {
    position: absolute;
    left: 12px;
    top: 41px;
}
.go-rows {
    flex: 1;
}
.go-line {
    height: 43px;
    display: flex;
    align-items: center;
    padding-top: 1px;
    margin-left: 21px;
}
.go-line2 {
    height: 22px;
    padding-top: 0;
    margin-left: 9px;
}
.check {
    width: 18px;
    height: 19px;
    flex: none;
    display: block;
    background: linear-gradient(#f2f2f2, #d4d4d4);
    border: 1px solid #8a8a8a;
    border-radius: 3px;
}
.check-on {
    background: #6f9ed4;
    border-color: #6c6c6c;
}
.check-on svg {
    display: block;
    margin: -2px 0 0 0;
}
.name-field {
    width: 194px;
    height: 24px;
    margin-left: 8px;
    padding-left: 4px;
    display: flex;
    align-items: center;
    background: #cecece;
    border: 1px solid #aaa;
    border-top-width: 2px;
    color: #7c7c7c;
}
.static-check {
    margin-left: 9px;
}
.static-label {
    margin-left: 6px;
}
.static-arrow {
    margin-left: 12px;
}
.tag-label {
    width: 40px;
}
.popup {
    height: 23px;
    display: flex;
    align-items: center;
    padding-left: 8px;
    font-size: 14.500px;
    color: #333;
    background: linear-gradient(#e4e4e4, #d4d4d4 50%, #c4c4c4);
    border: 1px solid #8a8a8a;
    border-radius: 3px;
    position: relative;
}
.popup::after {
    content: '';
    position: absolute;
    right: 7px;
    top: 1px;
    width: 0;
    height: 0;
    border: 3px solid transparent;
    border-bottom: 5px solid #333;
}
.popup::before {
    content: '';
    position: absolute;
    right: 7px;
    top: 12px;
    width: 0;
    height: 0;
    border: 3px solid transparent;
    border-top: 5px solid #333;
}
.popup-tag {
    width: 126px;
}
.layer-label {
    margin-left: 9px;
    width: 56px;
}
.popup-layer {
    width: 110px;
}
.comp {
    border-bottom: 2px solid #9a9a9a;
}
.comp-rect {
    height: 303px;
}
.comp-renderer {
    height: 63px;
}
.comp-head {
    height: 30px;
    display: flex;
    align-items: center;
    position: relative;
    padding-left: 8px;
}
.comp-head .arrow {
    margin-right: 5px;
}
.comp-title {
    position: absolute;
    left: 76px;
    font-weight: bold;
    font-size: 15.500px;
    letter-spacing: 0.7px;
}
.img-title {
    left: 76px;
    letter-spacing: 0.9px;
}
.img-ico {
    margin-top: -2px;
}
.img-check {
    position: absolute;
    left: 53px;
    top: 3px;
}
.c-help {
    position: absolute;
    left: 323px;
    top: 3px;
}
.c-pre {
    position: absolute;
    left: 352px;
    top: 6px;
}
.c-gear {
    position: absolute;
    left: 377px;
    top: 5px;
}
.rt-top {
    height: 99px;
    margin-top: -4px;
    display: flex;
}
.anchor {
    width: 127px;
    position: relative;
    flex: none;
}
.anchor-h {
    position: absolute;
    left: 38px;
    top: 3px;
    font-size: 14px;
    letter-spacing: 0.3px;
    color: #222;
    line-height: 19px;
}
.anchor-v {
    position: absolute;
    left: 4px;
    top: 32px;
    writing-mode: vertical-rl;
    transform: rotate(180deg);
    font-size: 13px;
    letter-spacing: 0.3px;
    color: #222;
}
.anchor-box {
    position: absolute;
    left: 24px;
    top: 23px;
    width: 73px;
    height: 74px;
    padding: 9px 10px;
    background: #d6d6d6;
    border: 2px solid #9a9a9a;
}
.anchor-inner {
    width: 100%;
    height: 100%;
    border: 2px solid #8a8a8a;
    position: relative;
}
.anchor-square {
    position: absolute;
    left: 12px;
    top: 12px;
    width: 25px;
    height: 26px;
    border: 2px solid #333;
}
.anchor-red-h {
    position: absolute;
    left: 0;
    right: 0;
    top: 23px;
    height: 2px;
    background: #d04848;
}
.anchor-red-v {
    position: absolute;
    left: 24px;
    top: 0;
    bottom: 0;
    width: 1px;
    background: #d04848;
}
.anchor-dot {
    position: absolute;
    left: 22px;
    top: 21px;
    width: 5px;
    height: 5px;
    background: #a86400;
}
.rt-grid {
    display: grid;
    grid-template-columns: 87px 87px 87px;
    grid-auto-rows: 24px;
    column-gap: 3px;
    align-items: center;
}
.rt-grid span {
    padding-left: 2px;
    color: #222;
}
.field {
    height: 24px;
    padding-left: 4px;
    display: flex;
    align-items: center;
    background: #d6d6d6;
    border: 2px solid #a4a4a4;
    border-bottom-color: #b0b0b0;
    border-right-color: #b4b4b4;
    color: #222;
    letter-spacing: 1px;
}
.bp-btns {
    width: 78px;
    height: 27px;
    margin: -3px 0 0 9px;
    display: flex;
    background: linear-gradient(#e8e8e8, #d8d8d8 50%, #c6c6c6);
    border: 1px solid #777;
    border-radius: 3px;
}
.bp-a {
    width: 39px;
    display: flex;
    align-items: center;
    justify-content: center;
    border-right: 1px solid #555;
}
.bp-a i {
    width: 15px;
    height: 14px;
    border: 1px dashed #444;
}
.bp-b {
    flex: 1;
    text-align: center;
    font-size: 14px;
    line-height: 24px;
    color: #555;
}
.vec-row {
    height: 24px;
    display: flex;
    align-items: center;
    color: #222;
}
.anchors-row {
    padding-left: 5px;
    gap: 5px;
}
.anchors-row .arrow {
    margin-right: 0;
}
.vec-name {
    width: 129px;
    flex: none;
    padding-left: 23px;
}
.sub-name {
    padding-left: 45px;
}
.axis {
    width: 18px;
    flex: none;
    font-size: 15px;
}
.short {
    width: 67px;
    margin-right: 5px;
}
.pivot-row {
    margin-top: 3px;
}
.rot-row {
    margin-top: 15px;
}
.scale-row {
    margin-top: 3px;
}
.cull-row {
    display: flex;
    align-items: center;
    padding: 0 0 0 23px;
    height: 20px;
    margin-top: -2px;
}
.cull-text {
    width: 180px;
    overflow: hidden;
    white-space: nowrap;
    letter-spacing: 0.7px;
    word-spacing: 1px;
}
.comp-image {
    height: 40px;
}
.comp-image .comp-head {
    height: 29px;
}
.scrollbar {
    flex: 1;
    background: #c8c8c8;
    padding-top: 66px;
}
.scroll-thumb {
    height: 486px;
    background: #dcdcdc;
    border: 1px solid #9a9a9a;
    border-top: 2px solid #6f8fb0;
    border-radius: 5px;
}

/* event debugger laid over the inspector */
.debugger {
    position: absolute;
    left: 0;
    right: 0;
    top: 612px;
    bottom: 0;
    background: #282828;
    overflow: hidden;
}
.debug-head {
    height: 24px;
    display: flex;
    align-items: center;
    background: #555;
    border-bottom: 1px solid #3a3a3a;
    padding-left: 7px;
}
.debug-tab {
    width: 206px;
    height: 100%;
    display: flex;
    align-items: center;
    padding: 2px 0 0 5px;
    gap: 6px;
    background: #4e4e4e;
    border-left: 1px solid #666;
    border-right: 1px solid #666;
    color: #f4f4f4;
    font-weight: bold;
    font-size: 15.500px;
    letter-spacing: 0.7px;
    word-spacing: 1px;
}
.updown {
    font-size: 8px;
    line-height: 7px;
    color: #999;
    font-weight: normal;
}
.debug-rule {
    flex: 1;
    height: 6px;
    margin-left: 6px;
    border-top: 1px solid #cfcfcf;
    border-bottom: 1px solid #bdbdbd;
}
.debug-box {
    margin: 17px 0 0 10px;
    background: #383838;
    border-radius: 6px 0 0 0;
    padding-left: 79px;
    height: 220px;
}
.ev-title {
    height: 15px;
    line-height: 15px;
    margin-left: 3px;
    font-weight: bold;
    font-size: 15.500px;
    letter-spacing: 0.8px;
    color: #a8a8a8;
}
.ev {
    height: 22px;
    line-height: 22px;
    position: relative;
    top: 4px;
    color: #989898;
    letter-spacing: 0.6px;
}
.bundle-row {
    position: absolute;
    left: 0;
    top: 236px;
    right: 0;
    height: 20px;
}
.bundle-label {
    position: absolute;
    left: 8px;
    top: 3px;
    font-size: 15px;
    color: #a8a8a8;
}
.bundle-pop {
    position: absolute;
    top: 0;
    height: 24px;
    padding: 1px 0 0 8px;
    background: #4c4c4c;
    border: 1px solid #6c6c6c;
    border-radius: 3px;
    font-size: 13px;
    color: #a8a8a8;
}
.bundle-a {
    left: 142px;
    width: 189px;
}
.bundle-b {
    left: 343px;
    width: 70px;
}
.label-badge {
    position: absolute;
    left: 385px;
    top: 204px;
    width: 34px;
    height: 23px;
    padding: 4px 0 0 6px;
    background: #2a65b5;
    border-radius: 12px;
}
.cursor {
    position: absolute;
    left: 198px;
    top: 108px;
}
```
